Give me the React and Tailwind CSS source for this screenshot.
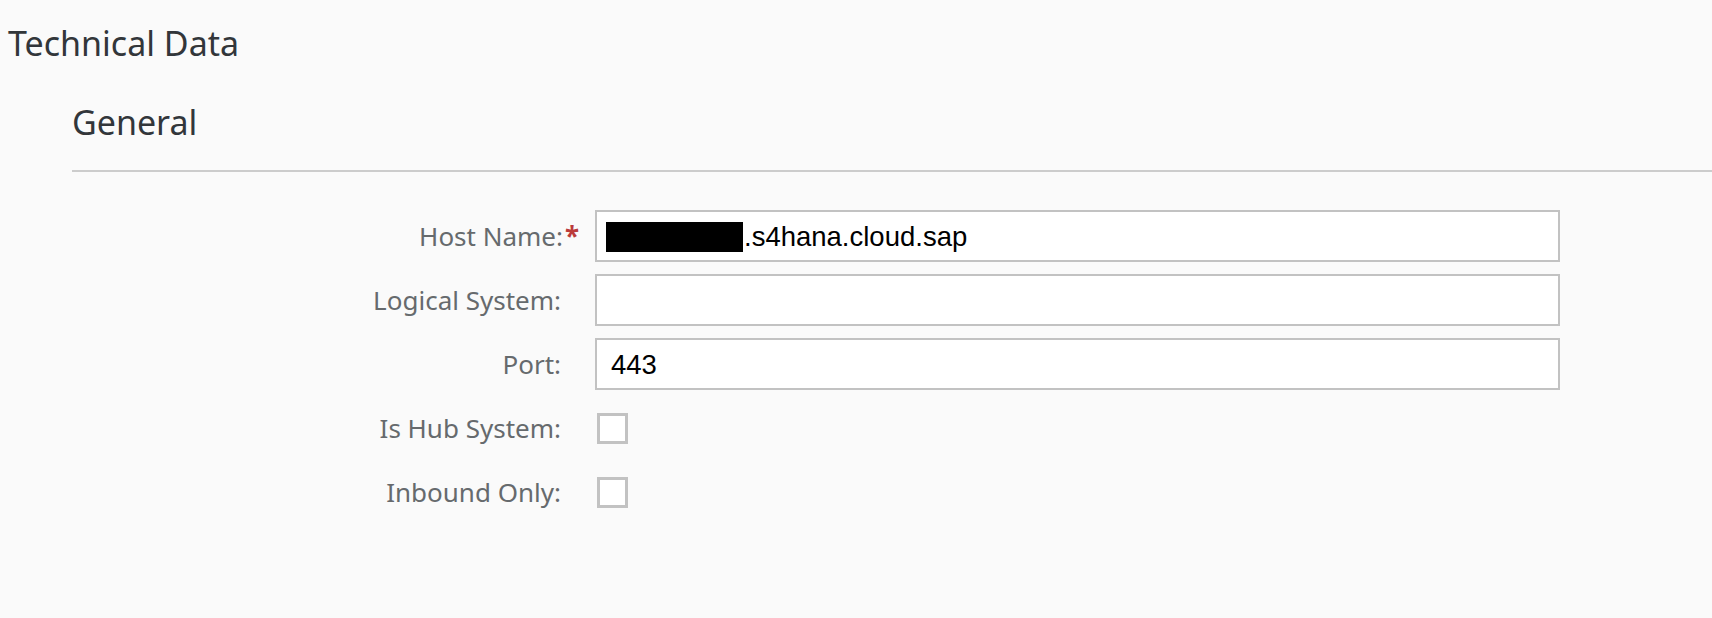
export default function App() {
  const font = { fontFamily: '"Noto Sans", "Open Sans", sans-serif' };
  const inputFont = { fontFamily: '"Liberation Sans", Arial, sans-serif' };
  const rows = [
    { label: "Host Name:", required: true, type: "input", value: "host" },
    { label: "Logical System:", type: "input", value: "" },
    { label: "Port:", type: "input", value: "443" },
    { label: "Is Hub System:", type: "checkbox" },
    { label: "Inbound Only:", type: "checkbox" },
  ];
  return (
    <div className="min-h-screen w-full bg-[#fafafa] overflow-hidden" style={font}>
      <div className="pl-[8px] pt-[23px] h-[63px] text-[34px] leading-[40px] text-[#32363a]">
        Technical Data
      </div>
      <div className="ml-[72px] mt-[39px]">
        <div className="pb-[28px] text-[34px] leading-[40px] text-[#32363a] border-b-2 border-[#cccccc]">
          General
        </div>
        <div className="mt-[38px] grid grid-cols-[508px_965px] gap-x-[15px] gap-y-[12px]">
          {rows.map((r) => (
            <div key={r.label} className="contents">
              <div className="h-[52px] flex items-center justify-end text-[26px] text-[#666a6d]">
                <span>{r.label}</span>
                {r.required ? (
                  <span className="ml-[2px] mr-[3px] w-[12px] text-[#bb3b3b] text-[26px] leading-none font-bold">*</span>
                ) : (
                  <span className="w-[19px]" />
                )}
              </div>
              <div className="h-[52px] flex items-center">
                {r.type === "input" ? (
                  <div
                    className="h-[52px] w-full bg-white border-2 border-[#c2c2c2] flex items-center pl-[14px] pt-[1px] text-[27.5px] text-black"
                    style={inputFont}
                  >
                    {r.value === "host" ? (
                      <>
                        <span className="inline-block w-[137px] h-[30px] bg-black ml-[-5px] mr-[1px]" />
                        <span>.s4hana.cloud.sap</span>
                      </>
                    ) : (
                      <span>{r.value}</span>
                    )}
                  </div>
                ) : (
                  <div className="ml-[2px] w-[31px] h-[31px] bg-white border-[3px] border-[#c2c2c2]" />
                )}
              </div>
            </div>
          ))}
        </div>
      </div>
    </div>
  );
}
